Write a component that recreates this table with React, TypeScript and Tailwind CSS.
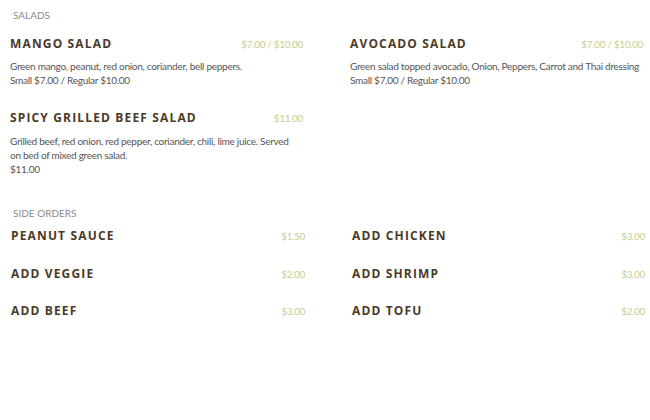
import React from "react";

const head = "font-['Open_Sans',sans-serif] font-bold text-[12px] tracking-[1.15px] text-[#4b3a28] uppercase leading-none";
const price = "font-['Lato',sans-serif] text-[10px] tracking-[-0.35px] text-[#c5d094] leading-none";
const body = "font-['Lato',sans-serif] text-[10px] tracking-[-0.28px] leading-[14px] text-[#555] whitespace-nowrap";
const label = "font-['Lato',sans-serif] text-[10px] text-[#8a8a8a] uppercase leading-none";

function Item({ name, p, desc }: { name: string; p: string; desc?: string[] }) {
  return (
    <div className="flex flex-col">
      <div className="flex items-center justify-between h-[14px]">
        <span className={head}>{name}</span>
        <span className={price}>{p}</span>
      </div>
      {desc && (
        <div className={`${body} mt-[8.5px]`}>
          {desc.map((d, i) => (
            <div key={i}>{d}</div>
          ))}
        </div>
      )}
    </div>
  );
}

export default function App() {
  return (
    <div className="w-[650px] h-[420px] bg-white relative">
      <div className="pl-[13px] pt-[10px]">
        <div className={label}>Salads</div>
      </div>
      <div className="grid grid-cols-[293px_293px] gap-x-[47px] pl-[10px] pt-[16.5px]">
        <div className="flex flex-col gap-[24px]">
          <Item
            name="Mango Salad"
            p="$7.00 / $10.00"
            desc={["Green mango, peanut, red onion, coriander, bell peppers.", "Small $7.00 / Regular $10.00"]}
          />
          <Item
            name="Spicy Grilled Beef Salad"
            p="$11.00"
            desc={["Grilled beef, red onion, red pepper, coriander, chili, lime juice. Served", "on bed of mixed green salad.", "$11.00"]}
          />
        </div>
        <div className="flex flex-col">
          <Item
            name="Avocado Salad"
            p="$7.00 / $10.00"
            desc={["Green salad topped avocado, Onion, Peppers, Carrot and Thai dressing", "Small $7.00 / Regular $10.00"]}
          />
        </div>
      </div>
      <div className="pl-[13px] pt-[32.5px]">
        <div className={label}>Side Orders</div>
      </div>
      <div className="grid grid-cols-[294px_293px] gap-x-[47px] gap-y-[23.5px] pl-[11px] pt-[11px]">
        <Item name="Peanut Sauce" p="$1.50" />
        <Item name="Add Chicken" p="$3.00" />
        <Item name="Add Veggie" p="$2.00" />
        <Item name="Add Shrimp" p="$3.00" />
        <Item name="Add Beef" p="$3.00" />
        <Item name="Add Tofu" p="$2.00" />
      </div>
    </div>
  );
}
